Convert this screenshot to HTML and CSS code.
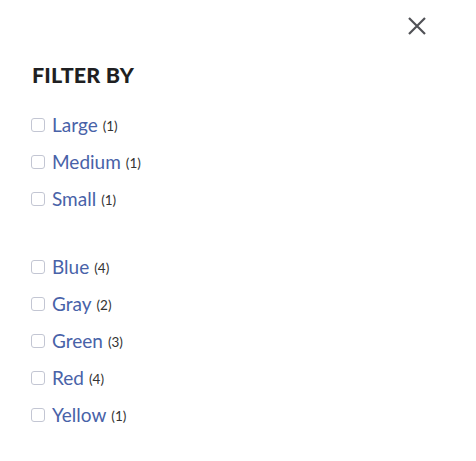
FILE: index.html
```html
<!DOCTYPE html>
<html>
<head>
<meta charset="utf-8">
<link rel="stylesheet" href="styles.css">
</head>
<body>
<div class="panel">
  <div class="topbar">
    <button class="close" aria-label="Close">
      <svg width="18" height="18" viewBox="0 0 18 18"><path d="M1 1 L17 17 M17 1 L1 17" stroke="#505156" stroke-width="2.2" fill="none"/></svg>
    </button>
  </div>
  <h2 class="title">FILTER BY</h2>
  <ul class="group">
    <li class="row"><span class="box"></span><a class="label">Large</a><span class="count">(1)</span></li>
    <li class="row"><span class="box"></span><a class="label">Medium</a><span class="count">(1)</span></li>
    <li class="row"><span class="box"></span><a class="label">Small</a><span class="count">(1)</span></li>
  </ul>
  <ul class="group">
    <li class="row"><span class="box"></span><a class="label">Blue</a><span class="count">(4)</span></li>
    <li class="row"><span class="box"></span><a class="label">Gray</a><span class="count">(2)</span></li>
    <li class="row"><span class="box"></span><a class="label">Green</a><span class="count">(3)</span></li>
    <li class="row"><span class="box"></span><a class="label">Red</a><span class="count">(4)</span></li>
    <li class="row"><span class="box"></span><a class="label">Yellow</a><span class="count">(1)</span></li>
  </ul>
</div>
</body>
</html>
```
FILE: styles.css
```css
html, body {
  margin: 0;
  padding: 0;
  background: #fff;
}
body {
  font-family: Lato, "Open Sans", sans-serif;
  color: #222;
}
.panel {
  padding: 0 32px 0 31px;
}
.topbar {
  display: flex;
  justify-content: flex-end;
  height: 52px;
  align-items: center;
  padding-right: 18px;
}
.close {
  border: 0;
  background: none;
  padding: 0;
  width: 18px;
  height: 18px;
  display: flex;
}
.title {
  margin: 10px 0 0 1px;
  font-size: 21.5px;
  line-height: 26px;
  font-weight: 900;
  letter-spacing: 0.2px;
  color: #1f1f22;
}
.group {
  list-style: none;
  margin: 18px 0 0 0;
  padding: 0;
}
.group + .group {
  margin-top: 31px;
}
.row {
  height: 37px;
  display: flex;
  align-items: center;
}
.box {
  width: 12px;
  height: 12px;
  border: 1px solid #c3c6d3;
  border-radius: 3px;
  margin-right: 7px;
  margin-top: 0;
  flex: none;
}
.label {
  font-size: 19px;
  color: #4862a8;
  text-decoration: none;
}
.count {
  font-size: 13.5px;
  color: #333;
  margin-left: 5px;
  margin-top: 2px;
}
```
